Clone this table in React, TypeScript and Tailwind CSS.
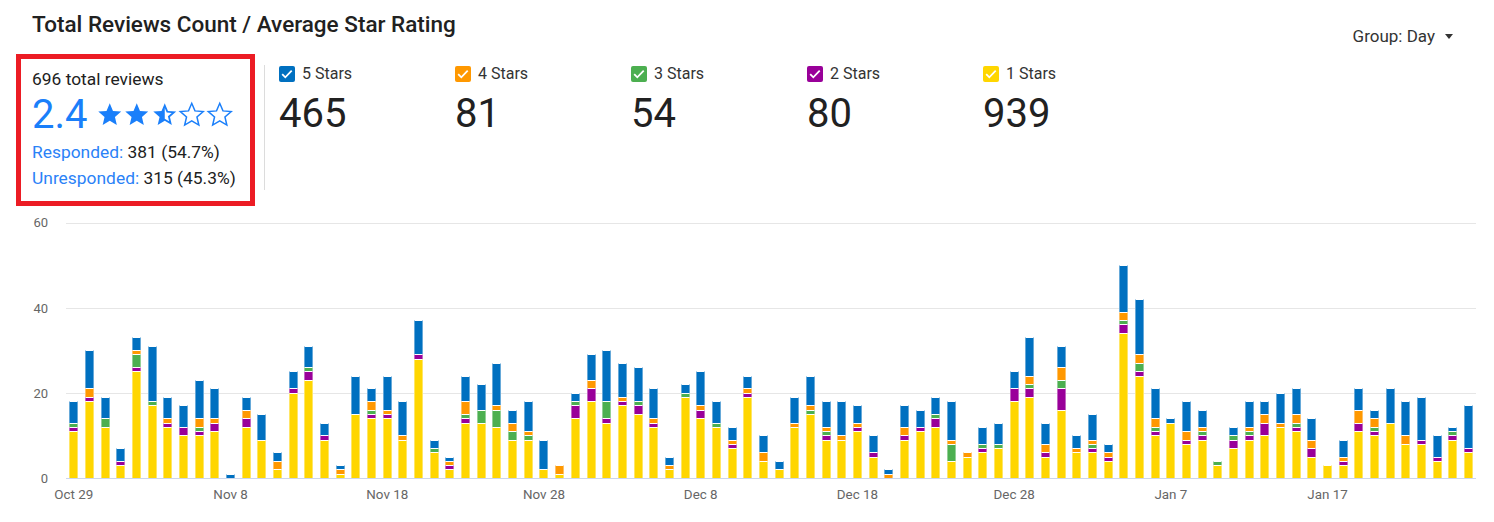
import React from 'react';

// [1 star, 2 stars, 3 stars, 4 stars, 5 stars] per day, stacked bottom-up
const days: number[][] = [
  [11, 1, 1, 0, 5], [18, 1, 0, 2, 9], [12, 0, 2, 0, 5], [3, 1, 0, 0, 3], [25, 1, 3, 1, 3],
  [17, 0, 1, 0, 13], [12, 1, 0, 1, 5], [10, 2, 0, 0, 5], [10, 1, 1, 2, 9], [11, 2, 0, 1, 7],
  [0, 0, 0, 0, 1], [12, 2, 0, 2, 3], [9, 0, 0, 0, 6], [2, 0, 0, 2, 2], [20, 1, 0, 0, 4],
  [23, 2, 1, 0, 5], [9, 1, 0, 0, 3], [1, 0, 0, 1, 1], [15, 0, 0, 0, 9], [14, 1, 1, 2, 3],
  [14, 1, 0, 1, 8], [9, 0, 0, 1, 8], [28, 1, 0, 0, 8], [6, 0, 1, 0, 2], [2, 1, 0, 1, 1],
  [13, 1, 1, 3, 6], [13, 0, 3, 0, 6], [12, 0, 4, 1, 10], [9, 0, 2, 2, 3], [9, 0, 1, 1, 7],
  [2, 0, 0, 0, 7], [1, 0, 0, 2, 0], [14, 3, 1, 0, 2], [18, 3, 0, 2, 6], [13, 1, 4, 0, 12],
  [17, 1, 0, 1, 8], [15, 2, 1, 0, 8], [12, 1, 0, 1, 7], [2, 0, 0, 1, 2], [19, 0, 1, 0, 2],
  [14, 2, 0, 1, 8], [12, 0, 1, 0, 5], [7, 1, 0, 1, 3], [19, 1, 0, 1, 3], [4, 0, 0, 2, 4],
  [2, 0, 0, 0, 2], [12, 0, 0, 1, 6], [15, 0, 1, 1, 7], [9, 1, 1, 1, 6], [9, 0, 0, 1, 8],
  [11, 1, 0, 1, 4], [5, 1, 0, 0, 4], [0, 0, 0, 1, 1], [9, 1, 0, 2, 5], [11, 1, 0, 0, 4],
  [12, 2, 1, 0, 4], [4, 0, 4, 1, 9], [5, 0, 0, 1, 0], [6, 1, 1, 0, 4], [7, 0, 1, 0, 5],
  [18, 3, 0, 0, 4], [19, 2, 1, 2, 9], [5, 1, 0, 2, 5], [16, 5, 2, 3, 5], [6, 0, 0, 1, 3],
  [6, 1, 1, 1, 6], [4, 1, 0, 1, 2], [34, 2, 1, 2, 11], [24, 1, 2, 2, 13], [10, 1, 1, 2, 7],
  [13, 0, 0, 0, 1], [8, 1, 0, 2, 7], [9, 1, 1, 1, 4], [3, 0, 1, 0, 0], [7, 2, 1, 0, 2],
  [9, 1, 1, 1, 6], [10, 3, 0, 2, 3], [12, 0, 0, 1, 7], [11, 1, 1, 2, 6], [5, 2, 0, 2, 5],
  [3, 0, 0, 0, 0], [3, 1, 0, 1, 4], [11, 2, 0, 3, 5], [10, 1, 1, 2, 2], [13, 0, 0, 0, 8],
  [8, 0, 0, 2, 8], [8, 1, 0, 0, 10], [4, 1, 0, 0, 5], [9, 1, 1, 0, 1], [6, 1, 0, 0, 10],
];

const segColors = ['bg-[#ffd600]', 'bg-[#990099]', 'bg-[#4caf50]', 'bg-[#ff9800]', 'bg-[#0070c0]'];

const xLabels: Record<number, string> = {
  0: 'Oct 29', 10: 'Nov 8', 20: 'Nov 18', 30: 'Nov 28', 40: 'Dec 8',
  50: 'Dec 18', 60: 'Dec 28', 70: 'Jan 7', 80: 'Jan 17',
};

const legend = [
  { label: '5 Stars', value: '465', color: 'bg-[#0070c0]' },
  { label: '4 Stars', value: '81', color: 'bg-[#ff9800]' },
  { label: '3 Stars', value: '54', color: 'bg-[#4caf50]' },
  { label: '2 Stars', value: '80', color: 'bg-[#990099]' },
  { label: '1 Stars', value: '939', color: 'bg-[#ffd600]' },
];

const PX_PER_UNIT = 256 / 60;

const STAR = 'M12 17.27L18.18 21l-1.64-7.03L22 9.24l-7.19-.61L12 2 9.19 8.63 2 9.24l5.46 4.73L5.82 21z';
const STAR_HALF =
  'M22 9.24l-7.19-.62L12 2 9.19 8.63 2 9.24l5.46 4.73L5.82 21 12 17.27 18.18 21l-1.63-7.03L22 9.24zM12 15.4V6.1l1.71 4.04 4.38.38-3.32 2.88 1 4.28L12 15.4z';

const Star = ({ kind }: { kind: 'full' | 'half' | 'empty' }) => (
  <svg viewBox="0 0 24 24" className="w-[27.5px] h-[27.5px]">
    {kind === 'full' && <path d={STAR} fill="#1a7ffa" />}
    {kind === 'half' && <path d={STAR_HALF} fill="#1a7ffa" />}
    {kind === 'empty' && (
      <path d={STAR} fill="none" stroke="#1a7ffa" strokeWidth="1.3" strokeLinejoin="miter" />
    )}
  </svg>
);

const Check = ({ color }: { color: string }) => (
  <span className={`w-[16px] h-[16px] rounded-[2px] flex items-center justify-center ${color}`}>
    <svg viewBox="0 0 16 16" className="w-[16px] h-[16px]">
      <path d="M3.2 8.2l3.1 3.1 6.4-6.6" fill="none" stroke="#fff" strokeWidth="1.8" />
    </svg>
  </span>
);

export default function App() {
  return (
    <div className="w-[1494px] h-[522px] bg-white text-[#212121] font-['Roboto','Liberation_Sans',sans-serif] overflow-hidden">
      {/* Header */}
      <div className="h-[54px] flex justify-between items-start pl-[32px] pr-[41px]">
        <h1 className="mt-[10px] text-[22.5px] leading-[28px] font-medium">
          Total Reviews Count / Average Star Rating
        </h1>
        <div className="mt-[25px] flex items-center gap-[10px] text-[17px] leading-[22px] text-[#333]">
          <span>Group: Day</span>
          <span className="w-0 h-0 border-x-[4px] border-x-transparent border-t-[5px] border-t-[#333]" />
        </div>
      </div>

      {/* Summary */}
      <div className="flex items-start pl-[16px]">
        <div className="w-[239px] h-[152px] border-[5px] border-[#ec1c24] pl-[11px] pt-[9px]">
          <div className="text-[17.4px] leading-[22px]">696 total reviews</div>
          <div className="flex items-center mt-[3px]">
            <span className="text-[40px] leading-[44px] text-[#1a7ffa]">2.4</span>
            <div className="flex ml-[8px]">
              <Star kind="full" />
              <Star kind="full" />
              <Star kind="half" />
              <Star kind="empty" />
              <Star kind="empty" />
            </div>
          </div>
          <div className="text-[17.4px] leading-[26px] mt-[2px]">
            <span className="text-[#2a82f7]">Responded:</span> 381 (54.7%)
          </div>
          <div className="text-[17.4px] leading-[26px]">
            <span className="text-[#2a82f7]">Unresponded:</span> 315 (45.3%)
          </div>
        </div>
        <div className="w-px h-[125px] bg-[#dcdcdc] ml-[9px] mt-[11px]" />
        <div className="flex ml-[14px] mt-[12px]">
          {legend.map((l) => (
            <div key={l.label} className="w-[176px]">
              <div className="flex items-center gap-[7px]">
                <Check color={l.color} />
                <span className="text-[16px] leading-[16px] text-[#333]">{l.label}</span>
              </div>
              <div className="text-[40px] leading-[48px] mt-[8px]">{l.value}</div>
            </div>
          ))}
        </div>
      </div>

      {/* Chart */}
      <div className="flex mt-[17px]">
        <div className="w-[66px] h-[256px] flex flex-col justify-between pr-[18px] text-[13px] text-[#666]">
          {['60', '40', '20', '0'].map((t) => (
            <div key={t} className="h-0 flex items-center justify-end">
              {t}
            </div>
          ))}
        </div>
        <div className="w-[1410px]">
          <div className="relative h-[256px]">
            <div className="absolute inset-0 flex flex-col justify-between">
              <div className="h-px bg-[#e6e6e6]" />
              <div className="h-px bg-[#e6e6e6]" />
              <div className="h-px bg-[#e6e6e6]" />
              <div className="h-px bg-[#ccd6eb]" />
            </div>
            <div className="absolute inset-x-0 top-0 bottom-px flex items-end">
              {days.map((d, i) => (
                <div key={i} className="flex-1 min-w-0 flex justify-center">
                  <div className="w-[9px] flex flex-col-reverse">
                    {d.map((v, k) =>
                      v > 0 ? (
                        <div
                          key={k}
                          className={`w-full border-x border-x-white/40 border-t border-t-white ${segColors[k]}`}
                          style={{ height: v * PX_PER_UNIT }}
                        />
                      ) : null
                    )}
                  </div>
                </div>
              ))}
            </div>
          </div>
          <div className="flex mt-[8px] text-[13.4px] leading-[16px] text-[#666]">
            {days.map((_, i) => (
              <div key={i} className="flex-1 min-w-0 flex justify-center">
                {xLabels[i] && <span className="whitespace-nowrap">{xLabels[i]}</span>}
              </div>
            ))}
          </div>
        </div>
      </div>
    </div>
  );
}
